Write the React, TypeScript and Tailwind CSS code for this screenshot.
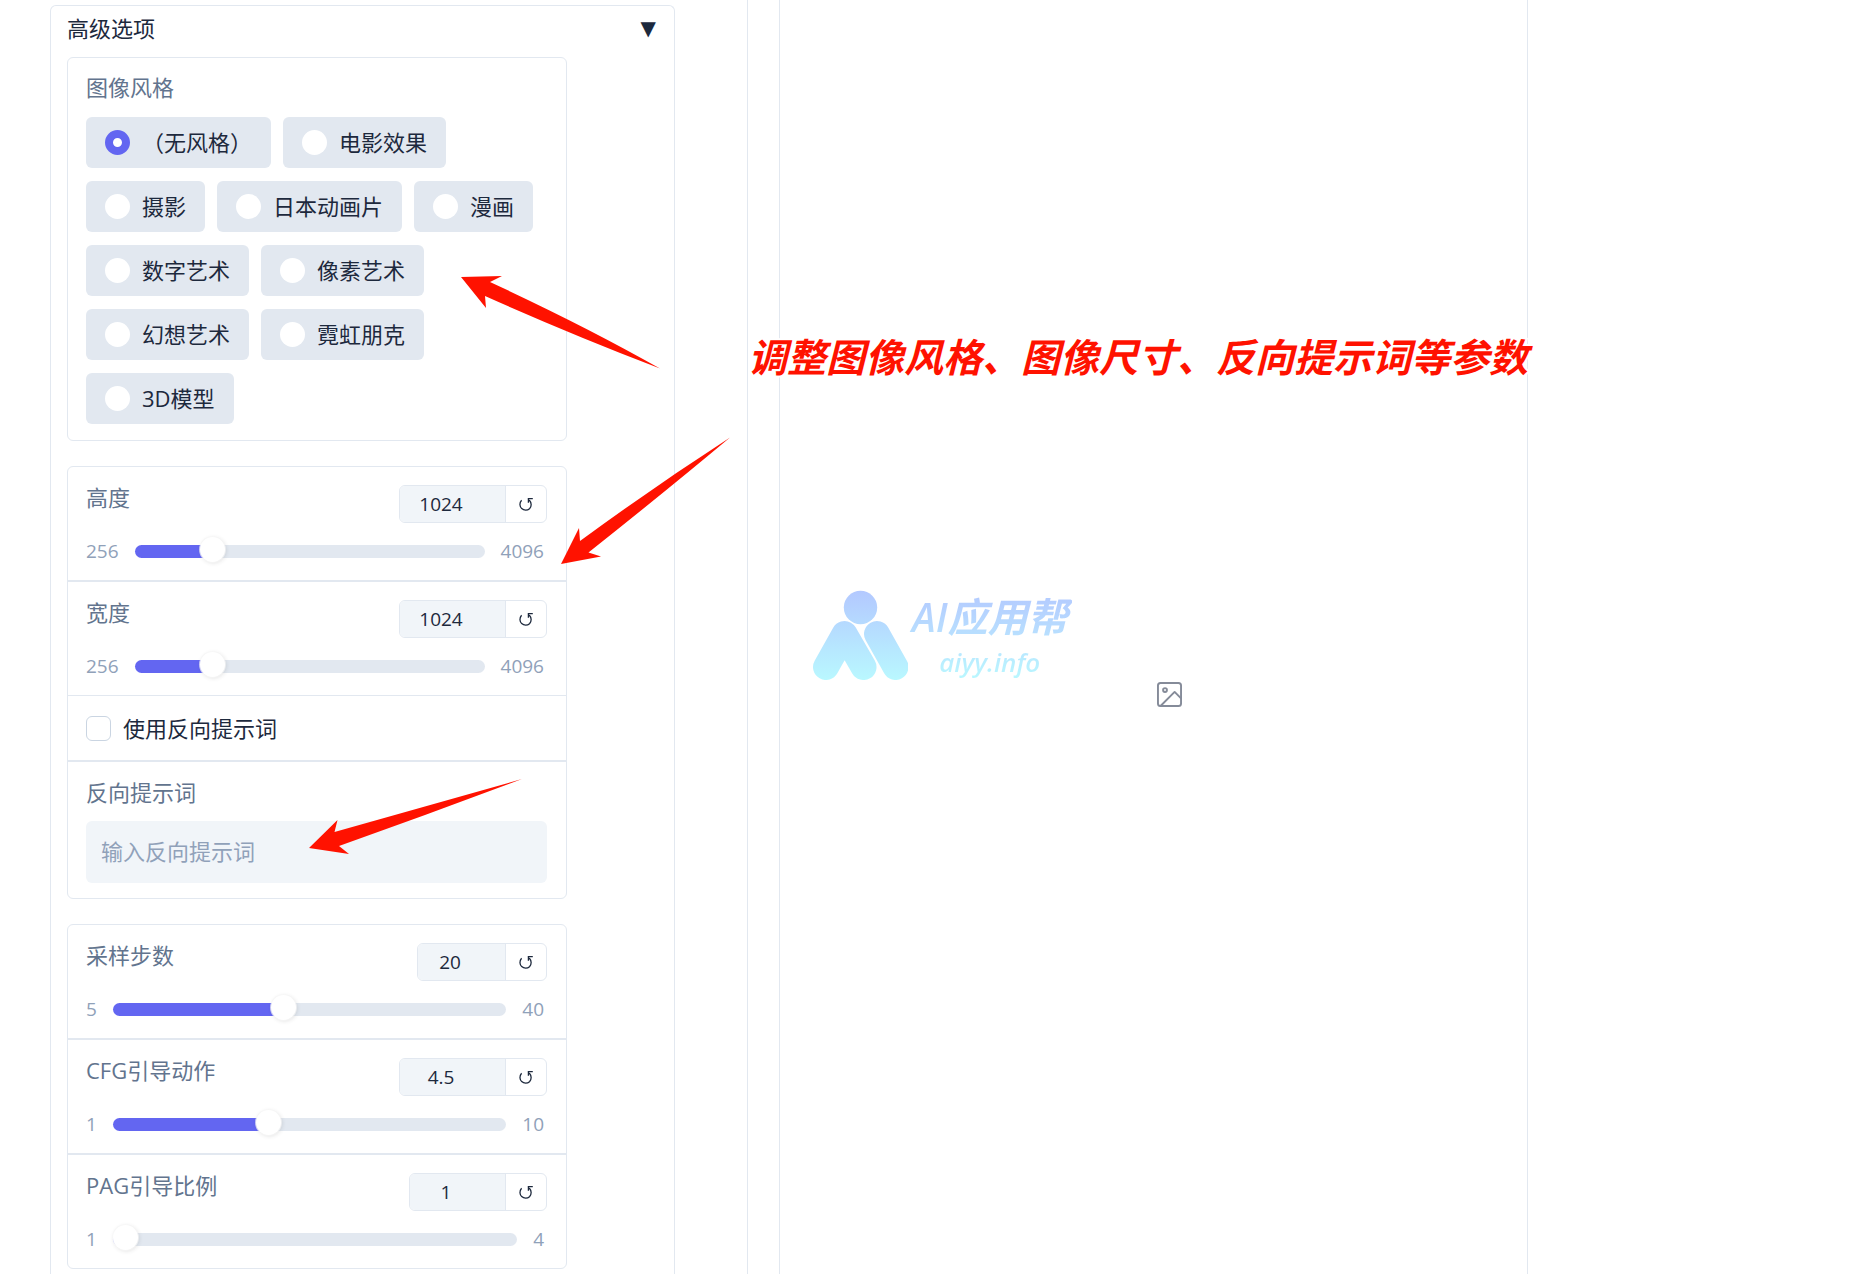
import React, { useState } from 'react';

type SliderFieldProps = {
  id: string;
  label: string;
  min: number;
  max: number;
  step?: number;
  initial: number;
  inputWidth: string;
};

const ResetIcon: React.FC = () => (
  <svg viewBox="0 0 14 14" className="h-3.5 w-3.5" fill="none" stroke="currentColor" strokeWidth="1.3" aria-hidden="true">
    <path d="M2.6 3.2C.1 6 .7 9.600 2.700 11.600c2.200 2 5.700 2 7.800.1 2.200-2.200 2.300-5.900-.3-8.700" />
    <path d="M13.800 1.700H9.400v4" />
  </svg>
);

const SliderField: React.FC<SliderFieldProps> = ({ id, label, min, max, step = 1, initial, inputWidth }) => {
  const [value, setValue] = useState(initial);
  const ratio = (value - min) / (max - min);
  // the fill has to end under the middle of the 25px thumb
  const fill = `calc(${ratio * 100}% + ${12 - ratio * 25}px)`;

  return (
    <div className="pt-[18px] pr-[19px] pb-[15px] pl-[18px]">
      <div className="flex items-start justify-between">
        <label htmlFor={id} className="text-[22px] leading-6 text-slate-500">
          {label}
        </label>
        <div className="flex h-[38px] overflow-hidden rounded-md border border-slate-200">
          <input
            id={id}
            type="number"
            min={min}
            max={max}
            step={step}
            value={value}
            onChange={(e) => setValue(Number(e.target.value))}
            className={`${inputWidth} bg-slate-100 pr-2 text-center text-[19px] font-medium text-slate-800 [appearance:textfield] focus:outline-none`}
          />
          <button
            type="button"
            aria-label={`重置${label}`}
            onClick={() => setValue(initial)}
            className="flex w-[41px] items-center justify-center border-l border-slate-200 text-slate-800"
          >
            <ResetIcon />
          </button>
        </div>
      </div>
      <div className="mt-3.5 flex items-center text-[19px] leading-7 text-slate-400">
        <span>{min}</span>
        <input
          type="range"
          aria-label={label}
          min={min}
          max={max}
          step={step}
          value={value}
          onChange={(e) => setValue(Number(e.target.value))}
          style={{ background: `linear-gradient(to right, #6366f1 ${fill}, #e2e8f0 ${fill})` }}
          className="mx-4 h-[13px] min-w-0 flex-1 cursor-pointer appearance-none rounded-full [&::-webkit-slider-runnable-track]:h-[13px] [&::-webkit-slider-thumb]:-mt-2 [&::-webkit-slider-thumb]:h-[25px] [&::-webkit-slider-thumb]:w-[25px] [&::-webkit-slider-thumb]:appearance-none [&::-webkit-slider-thumb]:rounded-full [&::-webkit-slider-thumb]:bg-white [&::-webkit-slider-thumb]:shadow-[0_0_0_1px_rgba(247,247,247,0.7),1px_1px_4px_rgba(50,50,50,0.15)]"
        />
        <span className="pr-[3px]">{max}</span>
      </div>
    </div>
  );
};

const styles = [
  '（无风格）',
  '电影效果',
  '摄影',
  '日本动画片',
  '漫画',
  '数字艺术',
  '像素艺术',
  '幻想艺术',
  '霓虹朋克',
  '3D模型',
];

const StylePicker: React.FC = () => {
  const [selected, setSelected] = useState(styles[0]);

  return (
    <fieldset className="rounded-md border border-slate-200 px-[18px] pt-3.5 pb-4">
      <legend className="float-left mb-[15px] w-full text-[22px] leading-[30px] text-slate-500">图像风格</legend>
      <div className="clear-both flex flex-wrap gap-x-3 gap-y-[13px]">
        {styles.map((style) => (
          <label
            key={style}
            className="flex h-[51px] cursor-pointer items-center gap-3 rounded-md bg-slate-200 px-[19px] text-[22px] text-slate-800"
          >
            <input
              type="radio"
              name="style"
              checked={selected === style}
              onChange={() => setSelected(style)}
              className="h-[25px] w-[25px] appearance-none rounded-full bg-white checked:border-8 checked:border-[#6366f1]"
            />
            {style}
          </label>
        ))}
      </div>
    </fieldset>
  );
};

const SizeSettings: React.FC = () => {
  const [useNegative, setUseNegative] = useState(false);

  return (
    <div className="rounded-md border border-slate-200">
      <SliderField id="height" label="高度" min={256} max={4096} initial={1024} inputWidth="w-[105px]" />
      <div className="border-t-2 border-slate-200">
        <SliderField id="width" label="宽度" min={256} max={4096} initial={1024} inputWidth="w-[105px]" />
      </div>
      <div className="border-t border-slate-200 px-[18px]">
        <label className="flex h-16 items-center gap-3 text-[22px] text-slate-800">
          <input
            type="checkbox"
            checked={useNegative}
            onChange={(e) => setUseNegative(e.target.checked)}
            className="h-[25px] w-[25px] appearance-none rounded-md border border-slate-300 bg-white checked:bg-[#6366f1]"
          />
          使用反向提示词
        </label>
      </div>
      <div className="border-t-2 border-slate-200 pt-[15px] pr-[19px] pb-[15px] pl-[18px]">
        <label htmlFor="negative" className="block text-[22px] leading-[30px] text-slate-500">
          反向提示词
        </label>
        <input
          id="negative"
          type="text"
          placeholder="输入反向提示词"
          className="mt-3.5 block h-[62px] w-full rounded-md bg-slate-100 px-[15px] pb-0.5 text-[22px] text-slate-800 placeholder:text-slate-400 focus:outline-none"
        />
      </div>
    </div>
  );
};

const SamplingSettings: React.FC = () => (
  <div className="divide-y-2 divide-slate-200 rounded-md border border-slate-200">
    <SliderField id="steps" label="采样步数" min={5} max={40} initial={20} inputWidth="w-[87px]" />
    <SliderField id="cfg" label="CFG引导动作" min={1} max={10} step={0.1} initial={4.5} inputWidth="w-[105px]" />
    <SliderField id="pag" label="PAG引导比例" min={1} max={4} step={0.1} initial={1} inputWidth="w-[95px]" />
  </div>
);

const Watermark: React.FC = () => (
  <div className="absolute top-[590px] left-[812px] flex">
    <svg viewBox="0 0 96 90" className="h-[90px] w-24" fill="none" aria-hidden="true">
      <defs>
        <linearGradient id="brand" gradientUnits="userSpaceOnUse" x1="0" y1="0" x2="0" y2="90">
          <stop offset="0" stopColor="#b3c8ff" />
          <stop offset="1" stopColor="#b9f8ff" />
        </linearGradient>
      </defs>
      <circle cx="48.500" cy="17.500" r="16.700" fill="url(#brand)" />
      <path
        d="M14 77L32.500 44L51.500 77"
        stroke="url(#brand)"
        strokeWidth="26"
        strokeLinecap="round"
        strokeLinejoin="round"
      />
      <path d="M65 44L83.500 77" stroke="url(#brand)" strokeWidth="26" strokeLinecap="round" />
    </svg>
    <div className="flex flex-col items-center italic">
      <span className="bg-linear-to-b from-[#b3c8ff] to-[#b9e4ff] bg-clip-text px-1 text-[40px] leading-[54px] font-semibold text-transparent">
        AI应用帮
      </span>
      <span className="bg-linear-to-b from-[#b9e4ff] to-[#b9f8ff] bg-clip-text px-1 text-[26px] leading-9 font-semibold text-transparent">
        aiyy.info
      </span>
    </div>
  </div>
);

const Annotations: React.FC = () => (
  <div className="pointer-events-none absolute inset-0 overflow-hidden">
    <svg className="absolute top-0 left-0 h-[900px] w-[760px]" viewBox="0 0 760 900" fill="#ff1200" aria-hidden="true">
      <path d="M461 277L502 276L490 282Q585 326 660 368.500Q570 334 485 296L486 308Z" />
      <path d="M561 564L579 528L580 541Q655 486 730 437.500Q666 491 588.500 552.500L601 556.500Z" />
      <path d="M309 848L337.500 820L334.500 832L522 779Q432 813 339 846L349 854Z" />
    </svg>
    <p className="absolute top-[333px] left-[748px] text-[39px] leading-[48px] font-bold whitespace-nowrap text-[#ff1200] italic [paint-order:stroke_fill] [-webkit-text-stroke:4px_#fff]">
      调整图像风格、图像尺寸、反向提示词等参数
    </p>
    <Watermark />
  </div>
);

const App: React.FC = () => {
  const [open, setOpen] = useState(true);

  return (
    <main className="relative grid min-h-screen grid-cols-[748fr_780fr_347fr] bg-white font-['Open_Sans','Noto_Sans_CJK_SC',sans-serif] text-slate-800">
      <div className="flex border-r border-slate-200 pt-[5px] pr-[72px] pl-[50px]">
        <section className="flex-1 rounded-t-md border border-b-0 border-slate-200 px-4 pb-[5px]">
          <button
            type="button"
            onClick={() => setOpen(!open)}
            className="mb-[7px] flex h-11 w-full items-center justify-between text-[22px]"
          >
            <span>高级选项</span>
            <span className="pr-0.5 font-['DejaVu_Sans',sans-serif] text-xl">▼</span>
          </button>
          {open && (
            <div className="flex w-full max-w-[500px] flex-col gap-[25px]">
              <StylePicker />
              <SizeSettings />
              <SamplingSettings />
            </div>
          )}
        </section>
      </div>

      <div className="flex pl-[31px]">
        <section className="flex flex-1 justify-center border-x border-slate-200 pt-[682px] pl-8">
          <svg
            viewBox="2.25 2.25 19.500 19.500"
            className="h-[25px] w-[25px] text-[#858b99]"
            fill="none"
            stroke="currentColor"
            strokeWidth="1.5"
            strokeLinecap="round"
            strokeLinejoin="round"
            aria-hidden="true"
          >
            <rect x="3" y="3" width="18" height="18" rx="2" />
            <circle cx="8.500" cy="8.500" r="1.500" />
            <polyline points="21 15 16 10 5 21" />
          </svg>
        </section>
      </div>

      <Annotations />
    </main>
  );
};

export default App;
